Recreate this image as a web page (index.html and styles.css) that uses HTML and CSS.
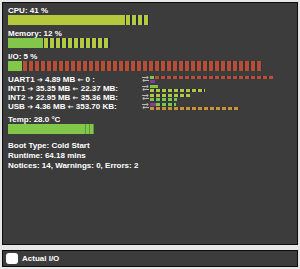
FILE: index.html
```html
<!DOCTYPE html>
<html lang="en">
<head>
  <meta charset="UTF-8" />
  <title>System Monitor</title>
  <link rel="stylesheet" href="styles.css">
</head>
<body>
  <div class="app">
    <div class="panel">
      <!-- load meters -->
      <div class="meter">
        <div class="meter__label">CPU: 41 %</div>
        <div class="meter__bar">
          <div class="fill fill--lime" style="width:117px"></div>
          <div class="segs segs--lime" style="width:24px"></div>
        </div>
      </div>
      <div class="meter">
        <div class="meter__label">Memory: 12 %</div>
        <div class="meter__bar">
          <div class="fill fill--green" style="width:35px"></div>
          <div class="segs segs--lime" style="width:67px"></div>
        </div>
      </div>
      <div class="meter">
        <div class="meter__label">I/O: 5 %</div>
        <div class="meter__bar">
          <div class="fill fill--green" style="width:14px"></div>
          <div class="segs segs--red" style="width:240px"></div>
        </div>
      </div>

      <!-- interfaces -->
      <div class="io">
        <div class="io__row">
          <span class="io__text">UART1 <span class="arr">➔</span> 4.89 MB <span class="arr">←</span> 0 :</span>
          <span class="io__icon"><svg width="7" height="6" viewBox="0 0 7 6"><path d="M0 1.5h6M4.5 0l1.8 1.5-1.8 1.5M7 4.5H1M2.5 3L.7 4.5 2.5 6" fill="none" stroke="#b8b8b8" stroke-width="1"/></svg></span>
          <span class="io__bars">
            <span class="io__line"><i class="dash dash--green" style="width:5px"></i><i class="dash dash--red" style="width:118px"></i></span>
            <span class="io__line"><i class="dash dash--purple" style="width:5px"></i></span>
          </span>
        </div>
        <div class="io__row">
          <span class="io__text">INT1 <span class="arr">➔</span> 35.35 MB <span class="arr">←</span> 22.37 MB:</span>
          <span class="io__icon"><svg width="7" height="6" viewBox="0 0 7 6"><path d="M0 1.5h6M4.5 0l1.8 1.5-1.8 1.5M7 4.5H1M2.5 3L.7 4.5 2.5 6" fill="none" stroke="#b8b8b8" stroke-width="1"/></svg></span>
          <span class="io__bars">
            <span class="io__line"><i class="dash dash--green solid" style="width:8px"></i></span>
            <span class="io__line"><i class="dash dash--lime" style="width:55px"></i></span>
          </span>
        </div>
        <div class="io__row">
          <span class="io__text">INT2 <span class="arr">➔</span> 22.95 MB <span class="arr">←</span> 35.36 MB:</span>
          <span class="io__icon"><svg width="7" height="6" viewBox="0 0 7 6"><path d="M0 1.5h6M4.5 0l1.8 1.5-1.8 1.5M7 4.5H1M2.5 3L.7 4.5 2.5 6" fill="none" stroke="#b8b8b8" stroke-width="1"/></svg></span>
          <span class="io__bars">
            <span class="io__line"><i class="dash dash--lime" style="width:40px"></i></span>
            <span class="io__line"><i class="dash dash--green" style="width:27px"></i></span>
          </span>
        </div>
        <div class="io__row">
          <span class="io__text">USB <span class="arr">➔</span> 4.36 MB <span class="arr">←</span> 353.70 KB:</span>
          <span class="io__icon"><svg width="7" height="6" viewBox="0 0 7 6"><path d="M0 1.5h6M4.5 0l1.8 1.5-1.8 1.5M7 4.5H1M2.5 3L.7 4.5 2.5 6" fill="none" stroke="#b8b8b8" stroke-width="1"/></svg></span>
          <span class="io__bars">
            <span class="io__line"><i class="dash dash--purple" style="width:6px"></i><i class="dash dash--green" style="width:20px"></i></span>
            <span class="io__line"><i class="dash dash--orange" style="width:90px"></i></span>
          </span>
        </div>
      </div>

      <!-- temperature -->
      <div class="meter meter--temp">
        <div class="meter__label">Temp: 28.0 °C</div>
        <div class="meter__bar">
          <div class="fill fill--green" style="width:77px"></div>
          <div class="segs segs--temp" style="width:9px"></div>
        </div>
      </div>

      <div class="info">
        <div>Boot Type: Cold Start</div>
        <div>Runtime: 64.18 mins</div>
        <div>Notices: 14, Warnings: 0, Errors: 2</div>
      </div>
    </div>

    <label class="footer">
      <span class="footer__check"></span>
      <span class="footer__label">Actual I/O</span>
    </label>
  </div>
</body>
</html>
```

FILE: styles.css
```css
*{margin:0;padding:0;box-sizing:border-box;}
body{
  background:#e7e7e7;
  font-family:"Liberation Sans",Arial,"DejaVu Sans",sans-serif;
  font-weight:bold;font-size:8px;color:#fff;
}
.app{display:flex;flex-direction:column;gap:5px;padding:2px 2px 0 2px;width:300px;}
.panel{
  height:243px;border:1px solid #0d0d0d;background:#3c3c3c;
  padding:3px 5px;
}
.meter{margin-bottom:4px;}
.meter__label{line-height:9px;height:9px;white-space:nowrap;}
.meter__bar{display:flex;height:10px;}
.fill{height:100%;}
.fill--lime{background:#b6c93c;}
.fill--green{background:#82c64a;}
.segs{height:100%;}
.segs--lime{background:repeating-linear-gradient(90deg,#1f2a44 0 1px,#b6c93c 1px 5px,#1f2a44 5px 6px);}
.segs--red{background:repeating-linear-gradient(90deg,#1c3a40 0 1px,#bf4a32 1px 5px,#1c3a40 5px 6px);}
.segs--temp{background:repeating-linear-gradient(90deg,#5f9a36 0 1px,#82c64a 1px 4px);}

.io{margin-top:1px;}
.io__row{display:flex;height:9px;line-height:9px;white-space:nowrap;}
.io__text{width:134px;}
.arr{font-family:"DejaVu Sans",sans-serif;font-size:7px;font-weight:bold;}
.io__icon{width:8px;display:flex;align-items:flex-start;padding-top:1px;}
.io__bars{display:flex;flex-direction:column;gap:1px;padding-top:1px;}
.io__line{display:flex;height:3px;}
.dash{display:block;height:100%;}
.dash--green{background:repeating-linear-gradient(90deg,#7cc64a 0 4px,#1f3340 4px 6px);}
.dash--lime{background:repeating-linear-gradient(90deg,#b2c63e 0 4px,#1f2a44 4px 6px);}
.dash--red{background:repeating-linear-gradient(90deg,#c24a32 0 4px,#1c3a40 4px 6px);}
.dash--orange{background:repeating-linear-gradient(90deg,#c8913c 0 4px,#3a3530 4px 6px);}
.dash--purple{background:#8a3a9a;}
.dash--green.solid{background:#7cc64a;}

.meter--temp{margin-top:4px;}
.info{margin-top:7px;line-height:10px;white-space:nowrap;}

.footer{
  display:flex;align-items:center;gap:4px;
  height:17px;border:1px solid #0d0d0d;background:#3c3c3c;
  padding-left:3px;
}
.footer__check{width:12px;height:11px;background:#fff;border-radius:3px;}
.footer__label{line-height:10px;}
```
